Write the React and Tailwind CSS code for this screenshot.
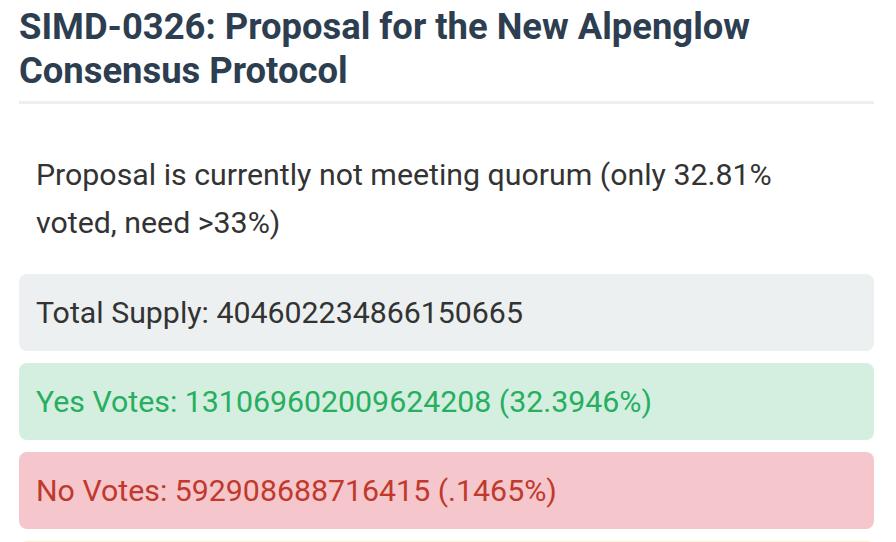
export default function App() {
  return (
    <div className="min-h-screen bg-white pl-[19px] pr-[22px] font-['Roboto',sans-serif] overflow-hidden h-[542px]">
      <h1 className="pt-[5px] pb-[8px] border-b-[3px] border-[#ecf0f1] text-[36.4px] leading-[44px] font-bold text-[#2c3e50]">
        SIMD-0326: Proposal for the New Alpenglow Consensus Protocol
      </h1>

      <p className="mt-[47px] pl-[17px] pr-[60px] text-[30.3px] leading-[48px] text-[#333]">
        Proposal is currently not meeting quorum (only 32.81% voted, need &gt;33%)
      </p>

      <div className="mt-[27px] flex flex-col gap-[12px]">
        <div className="h-[77px] flex items-center px-[17px] rounded-[8px] bg-[#ecf0f1] text-[30.3px] text-[#333]">
          Total Supply: 404602234866150665
        </div>
        <div className="h-[77px] flex items-center px-[17px] rounded-[8px] bg-[#d4efdf] text-[30.3px] text-[#27ae60]">
          Yes Votes: 131069602009624208 (32.3946%)
        </div>
        <div className="h-[77px] flex items-center px-[17px] rounded-[8px] bg-[#f5c6cb] text-[30.3px] text-[#c0392b]">
          No Votes: 592908688716415 (.1465%)
        </div>
        <div className="h-[77px] rounded-[8px] bg-[#fcf3cf]" />
      </div>
    </div>
  );
}
